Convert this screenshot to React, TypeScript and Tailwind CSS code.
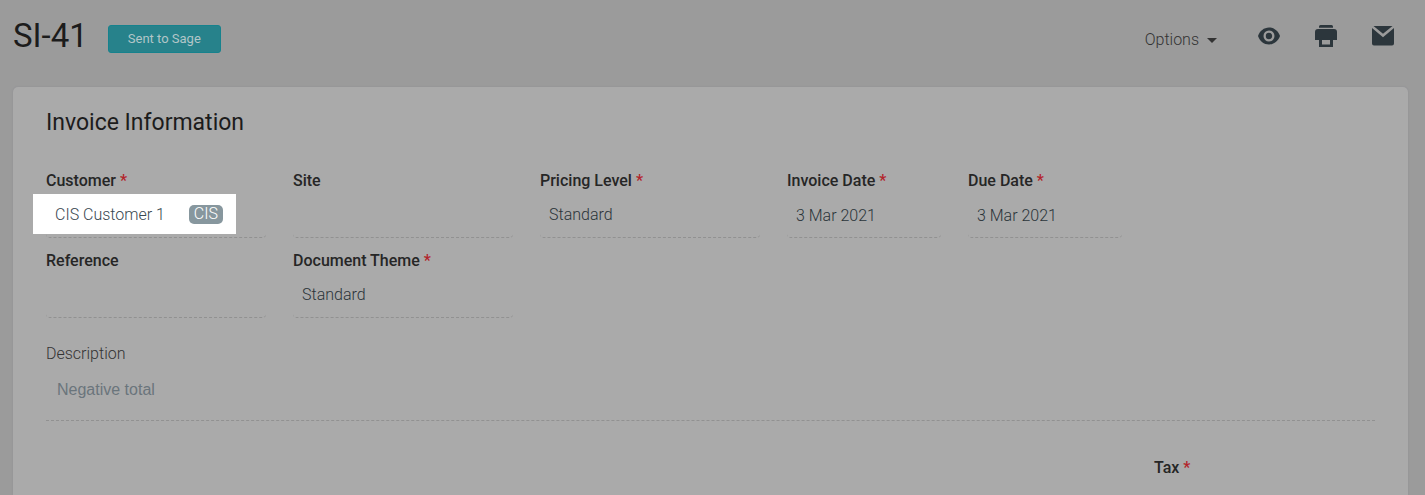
import { ReactNode } from "react";

const controlClass =
  "block h-[45px] w-full appearance-none rounded-[4px] border-b border-dashed border-[#919191] bg-transparent px-[9px] text-base font-light text-[#2a3439] outline-none";

const Required = () => <span className="text-[#b3242b]">*</span>;

function Field({
  id,
  label,
  required,
  narrow,
  children,
}: {
  id: string;
  label: string;
  required?: boolean;
  narrow?: boolean;
  children: ReactNode;
}) {
  return (
    <div className={narrow ? "w-[154px]" : "w-[220px]"}>
      <label htmlFor={id} className="block h-6 text-base leading-6 font-medium text-[#262626]">
        {label} {required && <Required />}
      </label>
      {children}
    </div>
  );
}

export default function App() {
  return (
    <main className="flex min-h-screen flex-col bg-[#9b9b9b] pr-[17px] pl-[13px] font-['Roboto',sans-serif] text-[#1c1c1c]">
      {/* Header */}
      <header className="flex h-[87px] items-start justify-between pt-3">
        <div className="flex items-center gap-5">
          <h1 className="text-[33px] leading-[48px]">SI-41</h1>
          <button
            type="button"
            className="mt-[6px] h-7 rounded-[3px] border border-[#16828d] bg-[#27828b] px-[19px] text-[13px] text-[#b2c6c8]"
          >
            Sent to Sage
          </button>
        </div>
        <div className="flex items-center pt-2 pr-[13px]">
          <button type="button" className="mt-2 mr-10 flex items-center gap-2 text-base font-light text-[#333]">
            Options
            <svg className="h-[5px] w-[10px]" viewBox="0 0 10 5" fill="#333">
              <path d="M0 0h10L5 5z" />
            </svg>
          </button>
          <div className="flex gap-[33px] text-[#2c363c]">
            <button type="button" aria-label="Preview">
              <svg className="h-6 w-6" viewBox="0 0 24 24" fill="currentColor">
                <path d="M12 3.500C7 3.500 2.700 7 1 12c1.700 5 6 8.500 11 8.500s9.300-3.500 11-8.500c-1.700-5-6-8.500-11-8.500zm0 14a5.500 5.500 0 1 1 0-11 5.500 5.500 0 0 1 0 11zm0-8.700a3.200 3.200 0 1 0 0 6.400 3.200 3.200 0 0 0 0-6.400z" />
              </svg>
            </button>
            <button type="button" aria-label="Print">
              <svg className="h-6 w-6" viewBox="0 0 24 24" fill="currentColor">
                <path d="M5 3.700V2.500A1.500 1.500 0 0 1 6.500 1h11A1.500 1.500 0 0 1 19 2.500v1.200zM4 5h16a3 3 0 0 1 3 3v8h-4v7H5v-7H1V8a3 3 0 0 1 3-3zm4 11v4.500h8V16z" />
              </svg>
            </button>
            <button type="button" aria-label="Email">
              <svg className="h-6 w-6" viewBox="0 0 24 24" fill="currentColor">
                <path d="M2.500 2h19L12 9.800zM1 4l11 9.300L23 4v15.500a2 2 0 0 1-2 2H3a2 2 0 0 1-2-2z" />
              </svg>
            </button>
          </div>
        </div>
      </header>

      {/* Invoice card */}
      <section className="flex-1 rounded-t-[5px] bg-[#aaa] px-[33px] pt-5 shadow-[0_0_2px_#8c8c92]">
        <h2 className="text-[23px] leading-8">Invoice Information</h2>

        <div className="mt-[30px] flex flex-wrap gap-x-[27px]">
          <Field id="customer" label="Customer" required>
            <div className="relative">
              <div className="absolute top-px -left-[13px] flex h-10 w-[203px] items-center justify-between bg-white pr-[13px] pl-[22px]">
                <input
                  id="customer"
                  defaultValue="CIS Customer 1"
                  className="w-[120px] bg-transparent pt-[2px] text-base font-light text-[#37474f] outline-none"
                />
                <span className="h-[19px] rounded-[5px] bg-[#87979e] px-[5px] text-base leading-[18px] font-light text-white">
                  CIS
                </span>
              </div>
              <div className="h-[45px] rounded-[4px] border-b border-dashed border-[#919191]" />
            </div>
          </Field>
          <Field id="site" label="Site">
            <input id="site" className={controlClass} />
          </Field>
          <Field id="pricing" label="Pricing Level" required>
            <select id="pricing" className={controlClass}>
              <option>Standard</option>
            </select>
          </Field>
          <Field id="invoice-date" label="Invoice Date" required narrow>
            <input id="invoice-date" defaultValue="3 Mar 2021" className={controlClass} />
          </Field>
          <Field id="due-date" label="Due Date" required narrow>
            <input id="due-date" defaultValue="3 Mar 2021" className={controlClass} />
          </Field>
        </div>

        <div className="mt-[11px] flex flex-wrap gap-x-[27px]">
          <Field id="reference" label="Reference">
            <input id="reference" className={controlClass} />
          </Field>
          <Field id="theme" label="Document Theme" required>
            <select id="theme" className={controlClass}>
              <option>Standard</option>
            </select>
          </Field>
        </div>

        <div className="mt-6">
          <label htmlFor="description" className="block h-6 text-base leading-6 font-light text-[#333]">
            Description
          </label>
          <textarea
            id="description"
            rows={1}
            defaultValue="Negative total"
            className="block h-[55px] w-full resize-none border-b border-dashed border-[#919191] px-[11px] pt-3 font-['Liberation_Sans',sans-serif] text-base leading-6 text-[#6a757c] outline-none"
          />
        </div>

        {/* Line item columns */}
        <div className="mt-[35px] flex justify-end">
          <div className="w-[221px] text-base leading-6 font-medium text-[#262626]">
            Tax <Required />
          </div>
        </div>
      </section>
    </main>
  );
}
